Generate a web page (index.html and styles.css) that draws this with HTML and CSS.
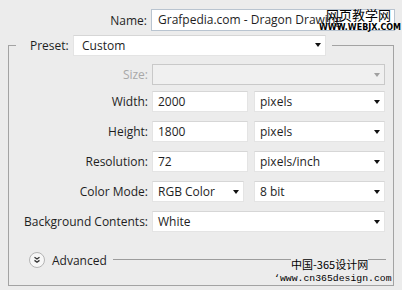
FILE: index.html
```html
<!DOCTYPE html>
<html lang="en">
<head>
  <meta charset="UTF-8">
  <meta name="viewport" content="width=device-width, initial-scale=1.0">
  <title>New Document</title>
  <link rel="stylesheet" href="styles.css">
</head>
<body>
  <!-- Document name -->
  <div class="name-row">
    <label class="name-label">Name:</label>
    <div class="field name-field">Grafpedia.com - Dragon Drawing</div>
  </div>

  <!-- Preset group -->
  <fieldset class="doc">
    <legend class="preset">
      <label class="preset-label">Preset:</label>
      <div class="field select preset-select"><span>Custom</span><i class="arrow"></i></div>
    </legend>

    <div class="row row-size">
      <label class="disabled">Size:</label>
      <div class="field select full off"><span></span><i class="arrow"></i></div>
    </div>

    <div class="row">
      <label>Width:</label>
      <div class="field value">2000</div>
      <div class="field select unit"><span>pixels</span><i class="arrow"></i></div>
    </div>

    <div class="row">
      <label>Height:</label>
      <div class="field value">1800</div>
      <div class="field select unit"><span>pixels</span><i class="arrow"></i></div>
    </div>

    <div class="row">
      <label>Resolution:</label>
      <div class="field value">72</div>
      <div class="field select unit"><span>pixels/inch</span><i class="arrow"></i></div>
    </div>

    <div class="row">
      <label>Color Mode:</label>
      <div class="field select mode"><span>RGB Color</span><i class="arrow"></i></div>
      <div class="field select unit"><span>8 bit</span><i class="arrow"></i></div>
    </div>

    <div class="row">
      <label>Background Contents:</label>
      <div class="field select full"><span>White</span><i class="arrow"></i></div>
    </div>

    <!-- Advanced toggle -->
    <div class="advanced">
      <svg class="toggle" width="16" height="16" viewBox="0 0 16 16">
        <circle cx="8" cy="8" r="7.5" fill="#f7f7f7" stroke="#b4b4b4"/>
        <path d="M5.5 5.2 L8 7 L10.5 5.2 M5.5 8.4 L8 10.2 L10.5 8.4" fill="none" stroke="#333" stroke-width="1.3"/>
      </svg>
      <span class="adv-text">Advanced</span>
      <div class="adv-line"></div>
    </div>
  </fieldset>

  <!-- watermarks -->
  <div class="mark-top">
    <div class="mark-cn">网页教学网</div>
    <div class="mark-url">WWW.WEBJX.COM</div>
  </div>
  <div class="mark-bottom">
    <div class="mark-cn2">中国-365设计网</div>
    <div class="mark-url2">‘www.cn365design.com</div>
  </div>
</body>
</html>
```

FILE: styles.css
```css
body {
  font-family: "Open Sans", "Noto Sans", sans-serif;
  font-size: 12px;
  color: #1e1e1e;
  background-color: #ececec;
  margin: 0;
  padding: 9px 0 0 0;
  width: 402px;
  height: 290px;
  box-sizing: border-box;
  overflow: hidden;
}

label {
  display: block;
  text-align: right;
  white-space: nowrap;
}

.field {
  box-sizing: border-box;
  height: 21px;
  background: #ffffff;
  border: 1px solid #e4e4e4;
  border-top-color: #d6d6d6;
  padding-left: 5px;
  line-height: 19px;
  white-space: nowrap;
  overflow: hidden;
}

.select {
  display: flex;
  align-items: center;
  justify-content: space-between;
  padding-right: 4px;
}

.arrow {
  width: 0;
  height: 0;
  border-left: 3.5px solid transparent;
  border-right: 3.5px solid transparent;
  border-top: 4px solid #111;
}

/* name */

.name-row {
  display: flex;
  align-items: center;
  height: 22px;
}

.name-label {
  width: 147px;
  margin-right: 4px;
}

.name-field {
  width: 244px;
  height: 22px;
  line-height: 20px;
  border-color: #b9c4d0;
  padding-left: 6px;
}

/* group */

.doc {
  margin: 4px 8px 0 8px;
  padding: 9px 0 17px 0;
  border: 1px solid #a3a3a3;
  min-width: 0;
}

.preset {
  display: flex;
  align-items: center;
  margin-left: 7px;
  padding: 0 6px 0 14px;
  height: 20px;
}

.preset-label {
  width: 39px;
  text-align: left;
  margin-right: 4px;
}

.preset-select {
  width: 253px;
  height: 21px;
  padding-left: 8px;
}

.row {
  display: flex;
  align-items: center;
  height: 21px;
  margin-bottom: 9px;
}

.row label {
  width: 139px;
  margin-right: 4px;
}

.row-size {
  margin-bottom: 6px;
}

.disabled {
  color: #a8a8a8;
}

.full {
  width: 233px;
}

.off {
  background: #f0f0f0;
  border-color: #c9c9c9;
}

.off .arrow {
  border-top-color: #a0a0a0;
}

.value {
  width: 96px;
  margin-right: 6px;
}

.mode {
  width: 92px;
  margin-right: 10px;
}

.unit {
  width: 131px;
}

.advanced {
  display: flex;
  align-items: center;
  margin: 20px 7px 0 20px;
  height: 16px;
}

.toggle {
  display: block;
}

.adv-text {
  margin-left: 7px;
}

.adv-line {
  flex: 1;
  height: 1px;
  background: #9c9c9c;
  margin-left: 6px;
  margin-top: -1px;
}

/* watermarks */

.mark-top {
  position: absolute;
  left: 319px;
  top: 7px;
  width: 78px;
  color: #000;
}

.mark-cn {
  font-family: "Noto Sans CJK SC", sans-serif;
  font-size: 13px;
  line-height: 15px;
  padding-left: 7px;
}

.mark-url {
  font-family: "DejaVu Sans", sans-serif;
  font-weight: bold;
  font-size: 8px;
  line-height: 9px;
  margin-top: 1px;
}

.mark-bottom {
  position: absolute;
  left: 274px;
  top: 256px;
  width: 118px;
  color: #000;
}

.mark-cn2 {
  display: inline-block;
  margin-left: 17px;
  background: #ececec;
  font-family: "Noto Sans CJK SC", sans-serif;
  font-size: 11px;
  line-height: 12px;
}

.mark-url2 {
  font-family: "Liberation Mono", monospace;
  font-size: 9.8px;
  line-height: 11px;
  white-space: nowrap;
}
```
